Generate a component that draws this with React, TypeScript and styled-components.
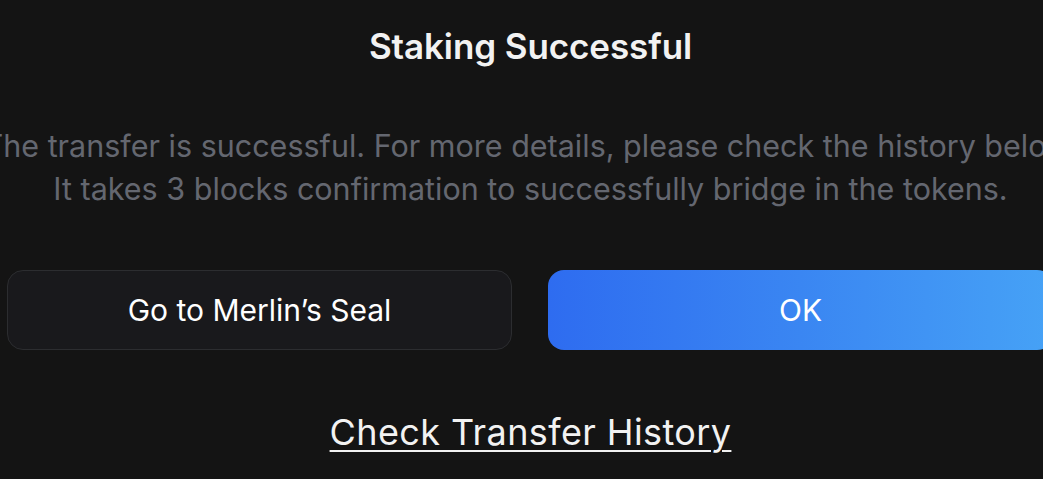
import React from "react";
import styled, { createGlobalStyle } from "styled-components";

const Global = createGlobalStyle`
  html, body { margin: 0; padding: 0; background: #141414; }
  body { font-family: Inter, "Noto Sans", sans-serif; overflow: hidden; }
`;

const Page = styled.div`
  width: 1043px;
  height: 479px;
  box-sizing: border-box;
  padding-left: 18px;
  background: #141414;
  display: flex;
  flex-direction: column;
  align-items: center;
  overflow: hidden;
`;

const Title = styled.h1`
  margin: 26px 0 0;
  font-size: 35px;
  font-weight: 600;
  line-height: 40px;
  color: #f2f2f2;
  letter-spacing: -0.1px;
`;

const Message = styled.p`
  margin: 58px 0 0;
  width: 1150px;
  flex-shrink: 0;
  text-align: center;
  font-size: 30.5px;
  line-height: 43px;
  color: #646770;
  font-weight: 400;
`;

const ButtonRow = styled.div`
  display: grid;
  grid-template-columns: 505px 505px;
  gap: 36px;
  width: 1046px;
  flex-shrink: 0;
  margin: 60px 0 0 -11px;
  align-self: flex-start;
`;

const Button = styled.button<{ $primary?: boolean }>`
  height: 80px;
  border-radius: 16px;
  font-family: inherit;
  font-size: 30px;
  font-weight: 400;
  color: #ffffff;
  cursor: pointer;
  border: ${(p) => (p.$primary ? "none" : "1.5px solid #2c2d30")};
  background: ${(p) =>
    p.$primary
      ? "linear-gradient(90deg, #2e6cf0 0%, #3a86f2 50%, #46a2f6 100%)"
      : "#19191c"};
`;

const HistoryLink = styled.a`
  margin-top: 62px;
  font-size: 36px;
  font-weight: 400;
  color: #f2f2f2;
  text-decoration: underline;
  text-decoration-thickness: 2px;
  text-underline-offset: 5px;
  line-height: 40px;
  letter-spacing: 0.4px;
`;

export default function App() {
  return (
    <>
      <Global />
      <Page>
        <Title>Staking Successful</Title>
        <Message>
          The transfer is successful. For more details, please check the history below.
          <br />
          It takes 3 blocks confirmation to successfully bridge in the tokens.
        </Message>
        <ButtonRow>
          <Button>Go to Merlin’s Seal</Button>
          <Button $primary>OK</Button>
        </ButtonRow>
        <HistoryLink href="#">Check Transfer History</HistoryLink>
      </Page>
    </>
  );
}
